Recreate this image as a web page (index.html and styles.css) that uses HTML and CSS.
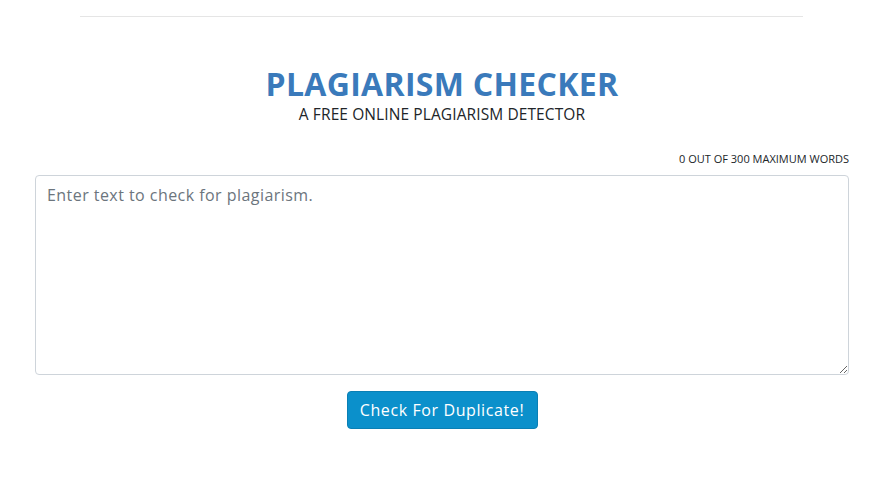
FILE: index.html
```html
<!DOCTYPE html>
<html lang="en">
<head>
<meta charset="utf-8">
<title>Plagiarism Checker</title>
<link rel="stylesheet" href="styles.css">
</head>
<body>
<div class="page">
  <hr class="rule">
  <header class="hero">
    <h1 class="title">PLAGIARISM CHECKER</h1>
    <p class="subtitle">A FREE ONLINE PLAGIARISM DETECTOR</p>
  </header>
  <div class="counter">0 OUT OF 300 MAXIMUM WORDS</div>
  <textarea class="input" placeholder="Enter text to check for plagiarism."></textarea>
  <div class="actions">
    <button class="btn" type="button">Check For Duplicate!</button>
  </div>
</div>
</body>
</html>
```
FILE: styles.css
```css
html, body {
  margin: 0;
  padding: 0;
  background: #ffffff;
}
body {
  font-family: "Open Sans", "Noto Sans", sans-serif;
  color: #212529;
}
.page {
  width: 814px;
  margin-left: 35px;
  display: flex;
  flex-direction: column;
}
.rule {
  margin: 16px 46px 0 45px;
  border: 0;
  border-top: 1px solid #e5e5e5;
  height: 0;
}
.hero {
  margin-top: 48px;
  text-align: center;
}
.title {
  margin: 0;
  font-size: 32px;
  line-height: 38px;
  font-weight: 700;
  letter-spacing: 0.3px;
  color: #3a7abb;
}
.subtitle {
  margin: 0;
  font-size: 15.5px;
  line-height: 22px;
  letter-spacing: 0.1px;
  color: #212529;
}
.counter {
  margin-top: 27px;
  text-align: right;
  font-size: 11px;
  line-height: 14px;
  color: #212529;
}
.input {
  margin-top: 9px;
  box-sizing: border-box;
  width: 814px;
  height: 200px;
  border: 1px solid #ced4da;
  border-radius: 4px;
  padding: 7px 11px;
  font-family: inherit;
  font-size: 16px;
  line-height: 24px;
  letter-spacing: 0.45px;
  color: #495057;
  resize: vertical;
}
.input::placeholder {
  color: #6c757d;
  opacity: 1;
}
.actions {
  margin-top: 16px;
  display: flex;
  justify-content: center;
}
.btn {
  box-sizing: border-box;
  width: 191px;
  height: 38px;
  background: #0b90cb;
  border: 1px solid #0a7fb4;
  border-radius: 4px;
  color: #ffffff;
  font-family: inherit;
  font-size: 16px;
  letter-spacing: 0.6px;
  padding: 0;
}
```
